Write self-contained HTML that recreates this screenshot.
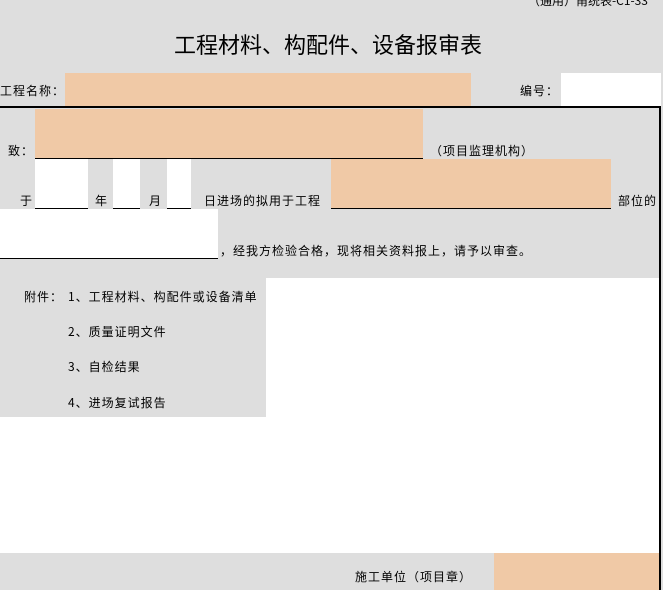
<!DOCTYPE html>
<html><head><meta charset="utf-8"><style>
body{margin:0;width:663px;height:590px;background:#dedede;position:relative;overflow:hidden;font-family:"Noto Sans CJK SC","Liberation Sans",sans-serif;font-size:12px;color:#000}
div{position:absolute}
.o{background:#f0c9a6}.w{background:#fff}
.t{white-space:nowrap;line-height:14px;letter-spacing:1px}
.u{border-bottom:1px solid #000}
</style></head><body>
<div class="t" style="left:528px;top:-6px;letter-spacing:0">（通用）甬统表-C1-33</div>
<div class="t" style="left:0;width:656px;top:31px;text-align:center;font-size:22px;line-height:26px;letter-spacing:0">工程材料、构配件、设备报审表</div>
<div class="t" style="left:0;top:84px">工程名称：</div>
<div class="o" style="left:65px;top:73px;width:406px;height:34px"></div>
<div class="t" style="left:520px;top:84px">编号：</div>
<div class="w" style="left:561px;top:73px;width:100px;height:34px"></div>
<div style="left:0;top:106px;width:660px;height:2px;background:#000"></div>
<div style="left:659px;top:106px;width:2px;height:484px;background:#000"></div>
<div class="t" style="left:8px;top:144px">致：</div>
<div class="o u" style="left:35px;top:109px;width:388px;height:49px"></div>
<div class="t" style="left:430px;top:144px">（项目监理机构）</div>
<div class="t" style="left:20px;top:194px">于</div>
<div class="w u" style="left:35px;top:159px;width:53px;height:49px"></div>
<div class="t" style="left:95px;top:194px">年</div>
<div class="w u" style="left:113px;top:159px;width:27px;height:49px"></div>
<div class="t" style="left:149px;top:194px">月</div>
<div class="w u" style="left:167px;top:159px;width:24px;height:49px"></div>
<div class="t" style="left:204px;top:194px">日进场的拟用于工程</div>
<div class="o u" style="left:331px;top:159px;width:280px;height:49px"></div>
<div class="t" style="left:618px;top:194px">部位的</div>
<div class="w u" style="left:0;top:209px;width:218px;height:49px"></div>
<div class="t" style="left:220px;top:244px">，经我方检验合格，现将相关资料报上，请予以审查。</div>
<div class="w" style="left:266px;top:278px;width:393px;height:275px"></div>
<div class="w" style="left:0;top:417px;width:266px;height:136px"></div>
<div class="t" style="left:24px;top:290px">附件：</div>
<div class="t" style="left:68px;top:290px">1、工程材料、构配件或设备清单</div>
<div class="t" style="left:68px;top:325px">2、质量证明文件</div>
<div class="t" style="left:68px;top:360px">3、自检结果</div>
<div class="t" style="left:68px;top:396px">4、进场复试报告</div>
<div class="o" style="left:494px;top:553px;width:165px;height:37px"></div>
<div class="t" style="left:355px;top:570px">施工单位（项目章）</div>
</body></html>
